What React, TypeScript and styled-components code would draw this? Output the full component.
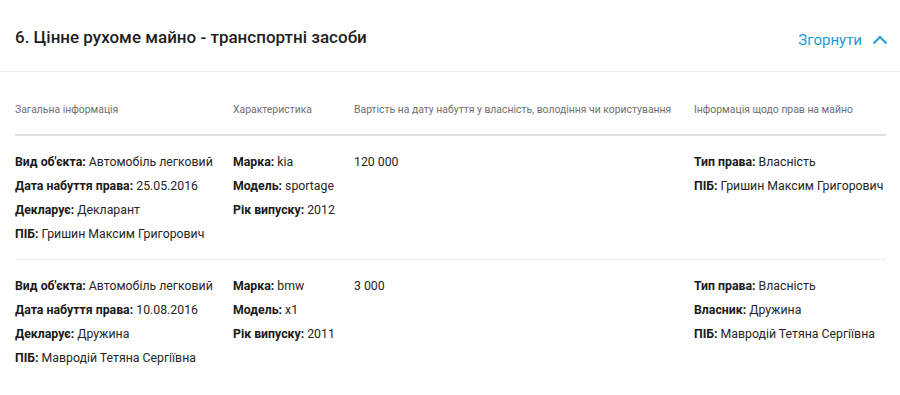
import React from "react";
import styled, { createGlobalStyle } from "styled-components";

const GlobalStyle = createGlobalStyle`
  body {
    margin: 0;
    background: #fff;
    font-family: Roboto, "Noto Sans", sans-serif;
    color: #222;
  }
`;

type Field = { label: string; value: string };

type Vehicle = {
  general: Field[];
  specs: Field[];
  cost: string;
  rights: Field[];
};

const vehicles: Vehicle[] = [
  {
    general: [
      { label: "Вид об'єкта", value: "Автомобіль легковий" },
      { label: "Дата набуття права", value: "25.05.2016" },
      { label: "Декларує", value: "Декларант" },
      { label: "ПІБ", value: "Гришин Максим Григорович" },
    ],
    specs: [
      { label: "Марка", value: "kia" },
      { label: "Модель", value: "sportage" },
      { label: "Рік випуску", value: "2012" },
    ],
    cost: "120 000",
    rights: [
      { label: "Тип права", value: "Власність" },
      { label: "ПІБ", value: "Гришин Максим Григорович" },
    ],
  },
  {
    general: [
      { label: "Вид об'єкта", value: "Автомобіль легковий" },
      { label: "Дата набуття права", value: "10.08.2016" },
      { label: "Декларує", value: "Дружина" },
      { label: "ПІБ", value: "Мавродій Тетяна Сергіївна" },
    ],
    specs: [
      { label: "Марка", value: "bmw" },
      { label: "Модель", value: "x1" },
      { label: "Рік випуску", value: "2011" },
    ],
    cost: "3 000",
    rights: [
      { label: "Тип права", value: "Власність" },
      { label: "Власник", value: "Дружина" },
      { label: "ПІБ", value: "Мавродій Тетяна Сергіївна" },
    ],
  },
];

const ChevronUp = () => (
  <svg width="16" height="10" viewBox="0 0 16 10" fill="none">
    <path d="M1.5 8.5 L8 2 L14.5 8.5" stroke="#1e9ad6" strokeWidth="2" />
  </svg>
);

const FieldList = ({ fields }: { fields: Field[] }) => (
  <>
    {fields.map((f, i) => (
      <Line key={i}>
        <b>{f.label}:</b> {f.value}
      </Line>
    ))}
  </>
);

export default function App() {
  return (
    <>
      <GlobalStyle />
      <Section>
        <Header>
          <Title>6. Цінне рухоме майно - транспортні засоби</Title>
          <Toggle>
            Згорнути <ChevronUp />
          </Toggle>
        </Header>
        <Table>
          <HeadRow>
            <HeadCell>Загальна інформація</HeadCell>
            <HeadCell>Характеристика</HeadCell>
            <HeadCell>Вартість на дату набуття у власність, володіння чи користування</HeadCell>
            <HeadCell>Інформація щодо прав на майно</HeadCell>
          </HeadRow>
          {vehicles.map((v, i) => (
            <Row key={i} $last={i === vehicles.length - 1}>
              <Cell>
                <FieldList fields={v.general} />
              </Cell>
              <Cell>
                <FieldList fields={v.specs} />
              </Cell>
              <Cell>
                <Line>{v.cost}</Line>
              </Cell>
              <Cell>
                <FieldList fields={v.rights} />
              </Cell>
            </Row>
          ))}
        </Table>
      </Section>
    </>
  );
}

const Section = styled.div`
  width: 900px;
`;

const Header = styled.div`
  display: flex;
  align-items: center;
  justify-content: space-between;
  height: 72px;
  padding: 0 12px 0 15px;
  box-sizing: border-box;
  border-bottom: 1px solid #ececec;
`;

const Title = styled.h2`
  margin: 0;
  font-size: 17px;
  font-weight: 500;
  color: #1f1f1f;
  padding-top: 3px;
`;

const Toggle = styled.div`
  display: flex;
  align-items: center;
  gap: 10px;
  font-size: 15px;
  color: #1e9ad6;
  cursor: pointer;
  padding-top: 8px;
`;

const Table = styled.div`
  padding: 0 14px 0 15px;
`;

const columns = "218px 121px 340px 1fr";

const HeadRow = styled.div`
  display: grid;
  grid-template-columns: ${columns};
  padding: 30px 0 16px;
  border-bottom: 2px solid #e3e3e3;
`;

const HeadCell = styled.div`
  font-size: 10.4px;
  line-height: 16px;
  color: #6f6f6f;
  white-space: nowrap;
`;

const Row = styled.div<{ $last?: boolean }>`
  display: grid;
  grid-template-columns: ${columns};
  padding: 14px 0 ${({ $last }) => ($last ? "20px" : "13px")};
  border-bottom: ${({ $last }) => ($last ? "none" : "1px solid #ececec")};
`;

const Cell = styled.div`
  display: flex;
  flex-direction: column;
`;

const Line = styled.div`
  font-size: 12.3px;
  line-height: 24px;
  color: #262626;
  white-space: nowrap;

  b {
    font-weight: 700;
    color: #1a1a1a;
  }
`;
